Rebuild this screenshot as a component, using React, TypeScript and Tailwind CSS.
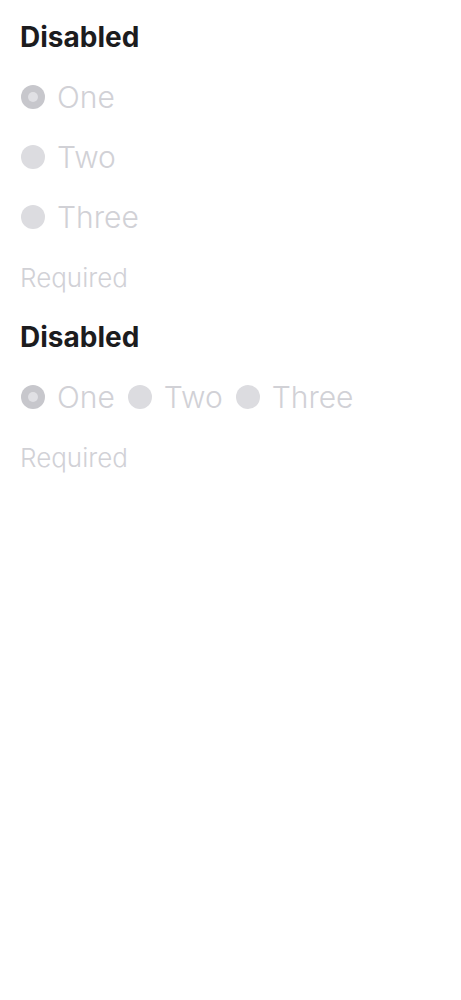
const options = ['One', 'Two', 'Three'];

function Radio({ label, checked }: { label: string; checked?: boolean }) {
  return (
    <label className="flex items-center gap-[12px] h-[60px]">
      <span
        className={`ml-[1px] w-[24px] h-[24px] rounded-full flex items-center justify-center ${
          checked ? 'bg-[#c7c7cc]' : 'bg-[#dcdce0]'
        }`}
      >
        {checked && <span className="w-[10px] h-[10px] rounded-full bg-[#e0e0e4]" />}
      </span>
      <span className="text-[30px] font-light text-[#d1d1d6] leading-none">{label}</span>
    </label>
  );
}

function Group({ inline }: { inline?: boolean }) {
  return (
    <div>
      <h2 className="text-[28px] font-bold text-[#1c1c1e] h-[60px] flex items-center">Disabled</h2>
      <div className={inline ? 'flex gap-[12px]' : 'flex flex-col'}>
        {options.map((o, i) => (
          <Radio key={o} label={o} checked={i === 0} />
        ))}
      </div>
      <p className="text-[26px] font-light text-[#d1d1d6] h-[60px] flex items-center">Required</p>
    </div>
  );
}

export default function App() {
  return (
    <div className="bg-white min-h-screen px-[20px] pt-[7px]" style={{ fontFamily: 'Inter, sans-serif' }}>
      <Group />
      <Group inline />
    </div>
  );
}
